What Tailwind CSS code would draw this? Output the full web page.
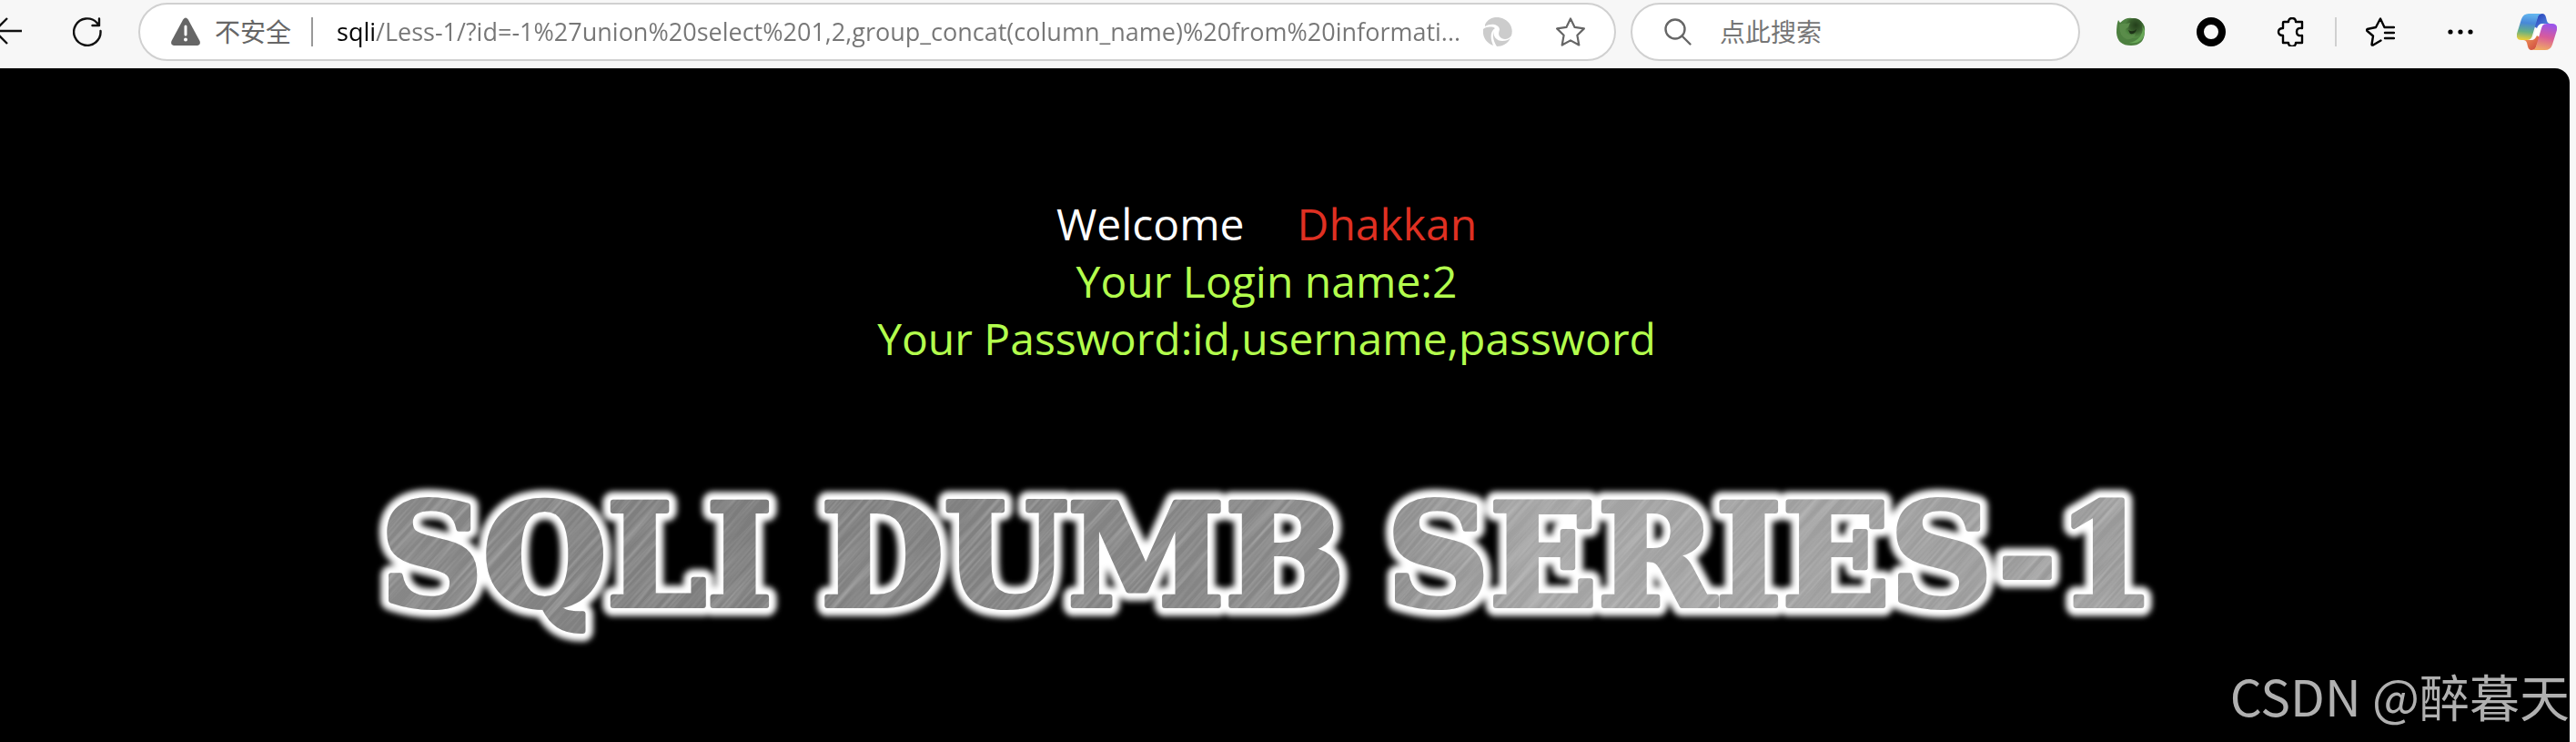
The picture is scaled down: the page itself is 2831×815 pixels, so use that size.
<!DOCTYPE html>
<html lang="zh-CN">
    <head>
        <meta charset="UTF-8" />
        <meta name="viewport" content="width=device-width, initial-scale=1.0" />
        <title>Less-1</title>
        <script src="https://cdn.jsdelivr.net/npm/@tailwindcss/browser@4"></script>
    </head>
    <body class="flex min-h-screen flex-col overflow-x-hidden bg-[#f7f7f7] font-['Open_Sans','Noto_Sans_CJK_SC',sans-serif]">
        <!-- Browser toolbar -->
        <header class="flex items-center pt-[3px] pr-[21px] pb-2">
            <button aria-label="Back" class="-ml-2 shrink-0">
                <svg class="size-8" viewBox="0 0 32 32" fill="none" stroke="#111" stroke-width="2.4">
                    <path d="M32 15H2M16 1 2 15l14 14" />
                </svg>
            </button>
            <button aria-label="Reload" class="ml-14 shrink-0">
                <svg class="size-8" viewBox="0 0 32 32" fill="none" stroke="#111" stroke-width="2.4" stroke-linecap="round" stroke-linejoin="round">
                    <path d="M30.500 15A14.700 14.700 0 1 1 26.500 6L29 9M29 1.500V9H21.500" />
                </svg>
            </button>

            <form class="ml-10 flex h-16 min-w-0 flex-1 items-center rounded-full border-2 border-[#d0d0d0] bg-white pl-[34px] pr-8">
                <svg class="size-8 shrink-0" viewBox="0 0 32 32">
                    <path d="M13.200 2.500Q16-1.500 18.800 2.500L31.500 26Q33 30.500 28.500 31H3.500Q-1 30.500.500 26Z" fill="#666" />
                    <path d="M16 10v9" stroke="#fff" stroke-width="3" stroke-linecap="round" />
                    <circle cx="16" cy="24.500" r="2" fill="#fff" />
                </svg>
                <label for="address" class="ml-4 shrink-0 text-[28px] leading-10 text-[#666]">不安全</label>
                <span class="ml-[22px] h-8 w-0.5 shrink-0 bg-[#999]"></span>
                <input
                    id="address"
                    type="text"
                    value="sqli/Less-1/?id=-1%27union%20select%201,2,group_concat(column_name)%20from%20informati..."
                    class="ml-[26px] min-w-0 flex-1 bg-linear-to-r from-black from-[42px] to-[#767676] to-[42px] bg-clip-text text-[27px] leading-10 text-transparent outline-none"
                />
                <button type="button" aria-label="Assistant" class="ml-3 shrink-0">
                    <svg class="size-8" viewBox="0 0 32 32" fill="#ccc">
                        <path d="M2 8C6 0 15-2 23 2c8 4 10 12 8 18-3 5-10 5-13 1-2-3 0-6 0-8C17 8 9 6 2 10Z" />
                        <path d="M0 13c4-3 10-3 13-1-6 4-5 12-2 19C3 28-1 21 0 13Z" />
                        <path d="M12 15c-2 6 3 11 9 11 4 0 7-1 9-3-3 6-9 9-15 9-4-6-5-12-3-17Z" />
                    </svg>
                </button>
                <button type="button" aria-label="Add to favorites" class="ml-12 shrink-0">
                    <svg class="size-8" viewBox="0 0 32 32" fill="none" stroke="#666" stroke-width="2.200" stroke-linejoin="round">
                        <path d="m16 1.500 4.600 9.400 10.300 1.500-7.500 7.300 1.900 10.800L16 25.400l-9.300 5.100 1.900-10.800-7.500-7.300 10.300-1.500Z" />
                    </svg>
                </button>
            </form>

            <form class="ml-4 flex h-16 w-[494px] shrink-0 items-center rounded-full border-2 border-[#d0d0d0] bg-white pl-[34px] pr-8">
                <svg class="size-8 shrink-0" viewBox="0 0 32 32" fill="none" stroke="#666" stroke-width="2.400" stroke-linecap="round">
                    <circle cx="13" cy="13" r="10.500" />
                    <path d="m20.500 20.500 9 9" />
                </svg>
                <input
                    type="search"
                    aria-label="搜索"
                    placeholder="点此搜索"
                    class="ml-[30px] min-w-0 flex-1 text-[28px] leading-10 outline-none placeholder:text-[#767676]"
                />
            </form>

            <nav class="ml-10 flex shrink-0 items-center" aria-label="Extensions">
                <button aria-label="HackBar">
                    <svg class="size-8" viewBox="0 0 32 32">
                        <defs>
                            <radialGradient id="globe" cx=".6" cy=".35" r=".6">
                                <stop offset="0" stop-color="#24401c" />
                                <stop offset=".5" stop-color="#365a2b" />
                                <stop offset="1" stop-color="#548c45" />
                            </radialGradient>
                        </defs>
                        <path d="M2 3 4 6Q10 0 17 1q7 0 10 4 5 3 4 12-1 14-15 14Q1 31 0 17 0 8 2 3Z" fill="#4d8040" />
                        <circle cx="19" cy="12" r="11" fill="url(#globe)" />
                        <path d="M3 8q4-2 8-1l4-1-2 5q-5 2-3 6 5 5 11 1-2 7-10 6Q3 21 3 8Z" fill="#5a8c4a" />
                        <path d="M27 6q4 8-1 15-5 6-12 7 16 2 17-13Z" fill="#69a858" />
                        <path d="M13 14q5 3 9-1-1 6-7 5Z" fill="#1d3117" />
                    </svg>
                </button>
                <button aria-label="Proxy" class="ml-14">
                    <svg class="size-8" viewBox="0 0 32 32" fill="none" stroke="#000" stroke-width="8">
                        <circle cx="16" cy="16" r="12" />
                    </svg>
                </button>
                <button aria-label="Extensions" class="ml-14">
                    <svg class="size-8" viewBox="0 0 32 32" fill="none" stroke="#000" stroke-width="2.400" stroke-linejoin="round">
                        <path d="M8 5h5q0-4 4-4t4 4h7v7q-6-1-6 4t6 4v8h-7q0 4-4 4t-4-4H7v-8q-5 0-5-4t5-4V6q0-1 1-1Z" />
                    </svg>
                </button>
                <span class="ml-8 h-8 w-0.5 bg-[#d0d0d0]"></span>
                <button aria-label="Favorites" class="ml-8">
                    <svg class="size-8" viewBox="0 0 32 32" fill="none" stroke="#000" stroke-width="2.400" stroke-linecap="round" stroke-linejoin="round">
                        <path d="M31 11H20.500L16 1.500 11 11 1.500 13q-1 1 0 2L8 20.500 6.500 30q0 1 1.500.500l8.500-5M21 17h10M21 23h10" />
                    </svg>
                </button>
                <button aria-label="Settings and more" class="ml-14">
                    <svg class="size-8" viewBox="0 0 32 32">
                        <circle cx="5" cy="16" r="2.600" />
                        <circle cx="16" cy="16" r="2.600" />
                        <circle cx="27" cy="16" r="2.600" />
                    </svg>
                </button>
                <button aria-label="Copilot" class="ml-[46px]">
                    <svg class="h-10 w-11" viewBox="0 0 44 40">
                        <defs>
                            <linearGradient id="cool" x1=".4" y1="0" x2=".3" y2="1">
                                <stop offset="0" stop-color="#62b5ee" />
                                <stop offset=".35" stop-color="#4888d8" />
                                <stop offset=".68" stop-color="#66b084" />
                                <stop offset="1" stop-color="#f0ce35" />
                            </linearGradient>
                            <linearGradient id="warm" x1=".6" y1="0" x2=".4" y2="1">
                                <stop offset="0" stop-color="#9a54ec" />
                                <stop offset=".5" stop-color="#d95b9a" />
                                <stop offset="1" stop-color="#f0ab62" />
                            </linearGradient>
                            <linearGradient id="foldBlue" x1="0" y1="0" x2="1" y2="1">
                                <stop offset="0" stop-color="#2338b4" />
                                <stop offset="1" stop-color="#5b95e8" />
                            </linearGradient>
                            <linearGradient id="foldRed" x1="0" y1="0" x2="1" y2="1">
                                <stop offset="0" stop-color="#f3a05c" />
                                <stop offset="1" stop-color="#cb3f3c" />
                            </linearGradient>
                        </defs>
                        <path d="M17 29 22 14q1-3 5-3h2L26 25q-1 4-5 4Z" fill="#fff" />
                        <path d="M19 14 23 3q1-3 5-3 3 0 4 4l1 4q1 3 4 3h-9q-4 0-6 5Z" fill="url(#foldBlue)" />
                        <path d="m25 26-4 11q-1 3-5 3-3 0-4-4l-1-4q-1-3-4-3h9q4 0 6-5Z" fill="url(#foldRed)" />
                        <path d="M13 0h15q-4 0-5 4l-6 20q-1 5-6 5H5q-6 0-5-7L5 6q2-6 8-6Z" fill="url(#cool)" />
                        <path d="M31 40H16q4 0 5-4l6-20q1-5 6-5h6q6 0 5 7l-5 16q-2 6-8 6Z" fill="url(#warm)" />
                    </svg>
                </button>
            </nav>
        </header>

        <!-- Page content -->
        <main class="relative mr-[7px] flex flex-1 flex-col items-center rounded-tr-2xl bg-black pt-[139px] pr-10">
            <div class="text-center text-[48px] leading-[63px] text-[#b3ff4d]">
                <p class="flex justify-center gap-[58px] text-white">
                    <span>Welcome</span>
                    <span class="text-[#df3022]">Dhakkan</span>
                </p>
                <p>Your Login name:2</p>
                <p>Your Password:id,username,password</p>
            </div>

            <svg class="mt-[117px] w-[2000px] max-w-full" viewBox="0 0 2000 200" role="img" aria-label="SQLI DUMB SERIES-1">
                <defs>
                    <g id="banner" font-family="'DejaVu Serif', serif" font-weight="700" font-size="156" stroke-linejoin="round">
                        <text x="26" y="145">SQLI</text>
                        <text x="510" y="145">DUMB</text>
                        <text x="1132" y="145">SERIES-1</text>
                    </g>
                    <mask id="letters" maskUnits="userSpaceOnUse" x="0" y="0" width="2000" height="200">
                        <use href="#banner" fill="#fff" stroke="#fff" stroke-width="6" />
                    </mask>
                    <linearGradient id="steel" x1="0" y1="0" x2="1" y2="0">
                        <stop offset="0" stop-color="#888" />
                        <stop offset=".2" stop-color="#7c7c7c" />
                        <stop offset=".55" stop-color="#888" />
                        <stop offset=".65" stop-color="#a4a4a4" />
                        <stop offset="1" stop-color="#989898" />
                    </linearGradient>
                    <filter id="brushed" x="0" y="0" width="1" height="1">
                        <feTurbulence type="fractalNoise" baseFrequency=".008 .25" numOctaves="3" seed="4" />
                        <feColorMatrix values="0 0 0 0 1  0 0 0 0 1  0 0 0 0 1  1.200 0 0 0 -.45" />
                    </filter>
                    <filter id="glow" x="-5%" y="-30%" width="110%" height="160%">
                        <feGaussianBlur stdDeviation="3" />
                    </filter>
                </defs>
                <use href="#banner" fill="#fff" stroke="#fff" stroke-width="23" filter="url(#glow)" />
                <use href="#banner" fill="#fff" stroke="#fff" stroke-width="10" />
                <g mask="url(#letters)">
                    <rect width="2000" height="200" fill="url(#steel)" />
                    <rect x="-200" y="-1200" width="2400" height="2600" transform="rotate(-48 1000 100)" filter="url(#brushed)" opacity=".4" />
                </g>
            </svg>

            <p class="absolute right-0 bottom-3 font-['Noto_Sans_CJK_SC',sans-serif] text-[55px] leading-20 whitespace-nowrap text-[#b0b0b0]">CSDN @醉暮天</p>
        </main>
    </body>
</html>
